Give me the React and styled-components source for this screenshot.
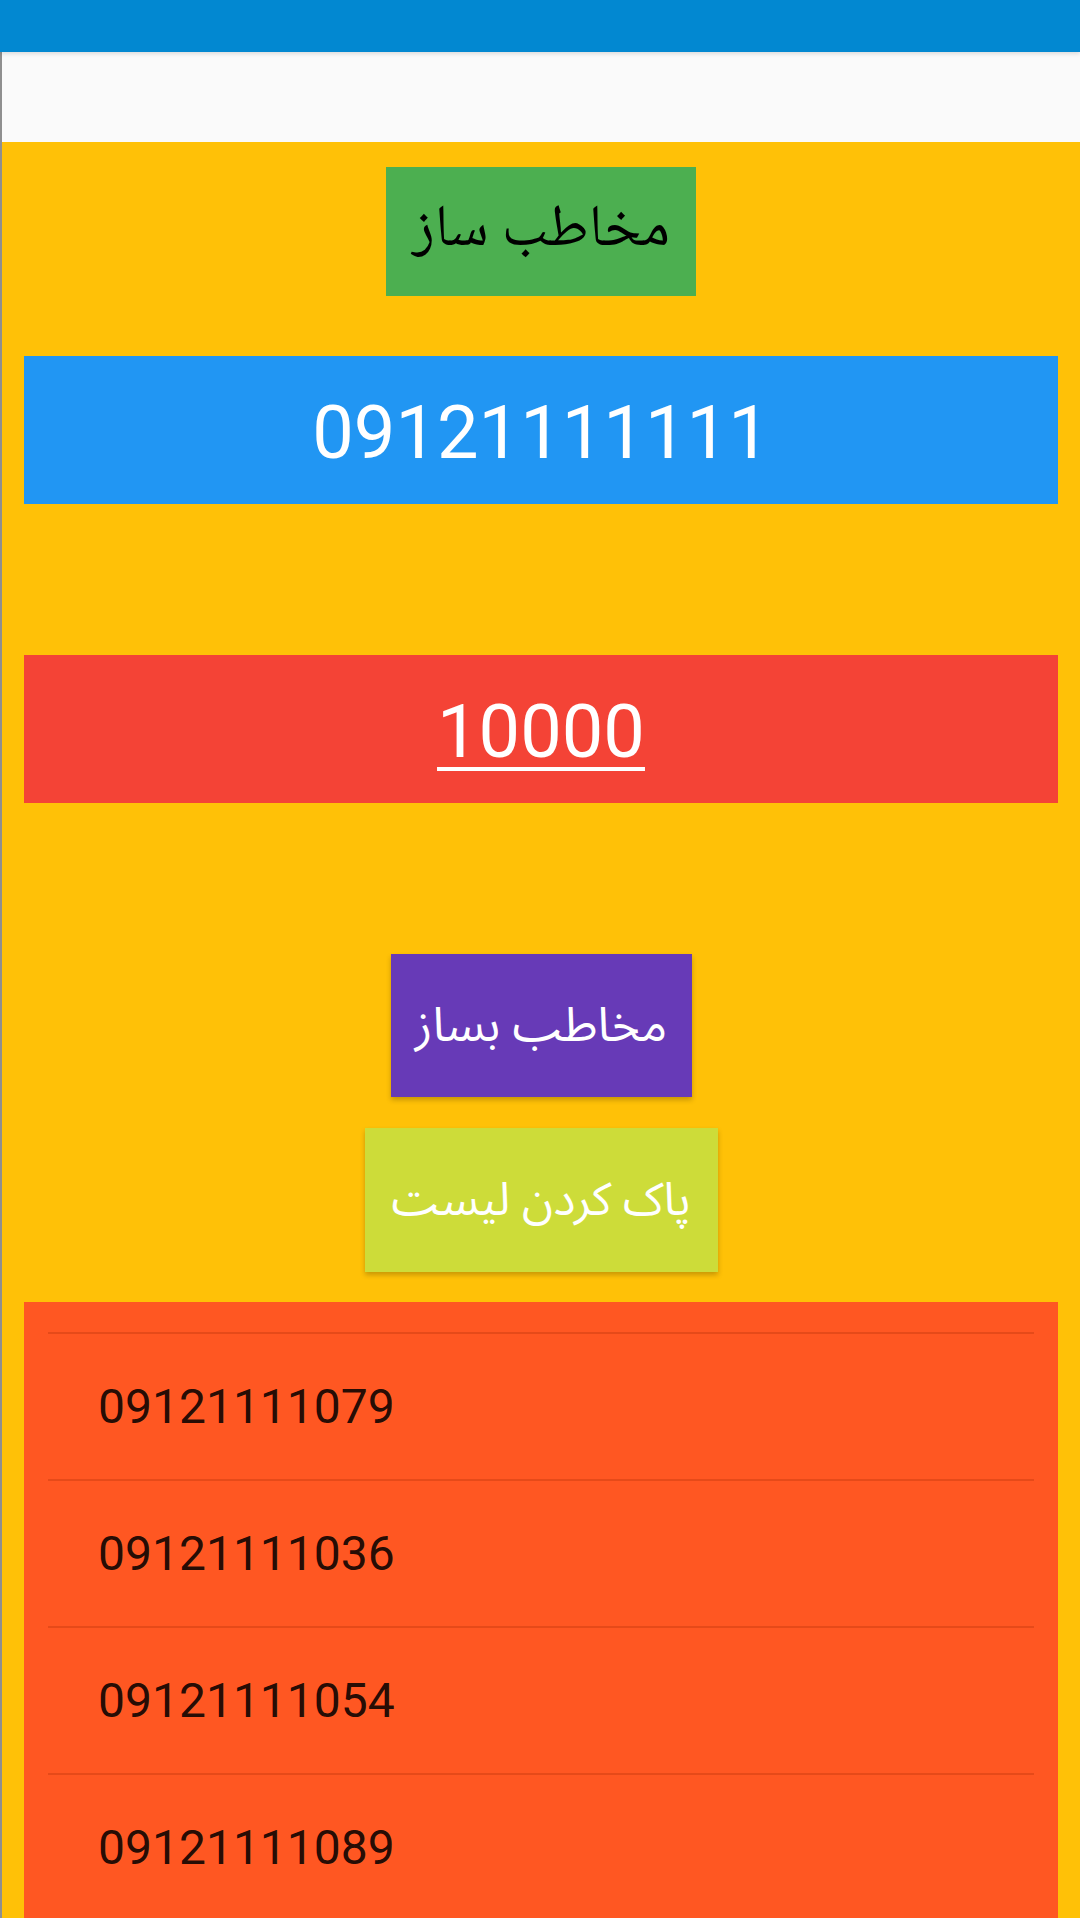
import React from 'react';
import styled, { createGlobalStyle } from 'styled-components';

const GlobalStyle = createGlobalStyle`
  html, body {
    margin: 0;
    padding: 0;
    background: #FFC107;
  }
  body {
    font-family: Roboto, "Noto Sans", sans-serif;
  }
`;

const Screen = styled.div`
  width: 1080px;
  height: 1918px;
  display: flex;
  flex-direction: column;
  overflow: hidden;
`;

const StatusBar = styled.div`
  height: 52px;
  flex-shrink: 0;
  background: #0288D1;
  position: relative;
  z-index: 2;
  box-shadow: 0 2px 4px rgba(0, 0, 0, 0.12);
`;

const Body = styled.div`
  flex: 1;
  display: flex;
  flex-direction: column;
  border-left: 2px solid #8f8f8f;
  min-height: 0;
`;

const Toolbar = styled.div`
  height: 90px;
  flex-shrink: 0;
  background: #FAFAFA;
`;

const Content = styled.div`
  flex: 1;
  display: flex;
  flex-direction: column;
  align-items: center;
  background: #FFC107;
  padding: 0 22px 0 22px;
  min-height: 0;
`;

const ArabicButton = styled.div`
  width: ${({ w }) => w}px;
  height: ${({ h }) => h}px;
  margin-top: ${({ gap }) => gap}px;
  flex-shrink: 0;
  display: flex;
  align-items: center;
  justify-content: center;
  direction: rtl;
  background: ${({ bg }) => bg};
  color: ${({ fg }) => fg};
  font-family: ${({ serif }) =>
    serif
      ? '"Noto Naskh Arabic", "DejaVu Serif", "DejaVu Sans", serif'
      : '"Noto Sans Arabic", "Noto Sans", "DejaVu Sans", sans-serif'};
  font-size: ${({ size }) => size}px;
  box-shadow: ${({ raised }) =>
    raised ? '0 3px 5px rgba(0, 0, 0, 0.22)' : 'none'};
`;

const NumberBox = styled.div`
  width: 100%;
  height: 148px;
  margin-top: ${({ gap }) => gap}px;
  flex-shrink: 0;
  display: flex;
  align-items: center;
  justify-content: center;
  background: ${({ bg }) => bg};
  color: #ffffff;
  font-family: Roboto, sans-serif;
  font-size: 74px;
  padding-top: 4px;
  box-sizing: border-box;
  text-decoration: ${({ underline }) => (underline ? 'underline' : 'none')};
  text-decoration-thickness: 4px;
  text-underline-offset: 10px;
`;

const List = styled.div`
  width: 100%;
  flex: 1;
  margin-top: 30px;
  background: #FF5722;
  padding: 30px 24px 0;
  box-sizing: border-box;
  min-height: 0;
`;

const Row = styled.div`
  height: 145px;
  border-top: 2px solid #E64A19;
  display: flex;
  align-items: center;
  padding-left: 50px;
  font-family: Roboto, sans-serif;
  font-size: 48px;
  color: rgba(0, 0, 0, 0.87);
`;

const numbers = ['09121111079', '09121111036', '09121111054', '09121111089'];

export default function App() {
  return (
    <>
      <GlobalStyle />
      <Screen>
        <StatusBar />
        <Body>
          <Toolbar />
          <Content>
            <ArabicButton w={310} h={129} gap={25} bg="#4CAF50" fg="#000" size={59} serif>
              مخاطب ساز
            </ArabicButton>
            <NumberBox gap={60} bg="#2196F3">09121111111</NumberBox>
            <NumberBox gap={151} bg="#F44336" underline>10000</NumberBox>
            <ArabicButton w={301} h={143} gap={151} bg="#673AB7" fg="#fff" size={48} raised>
              مخاطب بساز
            </ArabicButton>
            <ArabicButton w={353} h={144} gap={31} bg="#CDDC39" fg="#fff" size={46} raised>
              پاک کردن لیست
            </ArabicButton>
            <List>
              {numbers.map((n) => (
                <Row key={n}>{n}</Row>
              ))}
            </List>
          </Content>
        </Body>
      </Screen>
    </>
  );
}
